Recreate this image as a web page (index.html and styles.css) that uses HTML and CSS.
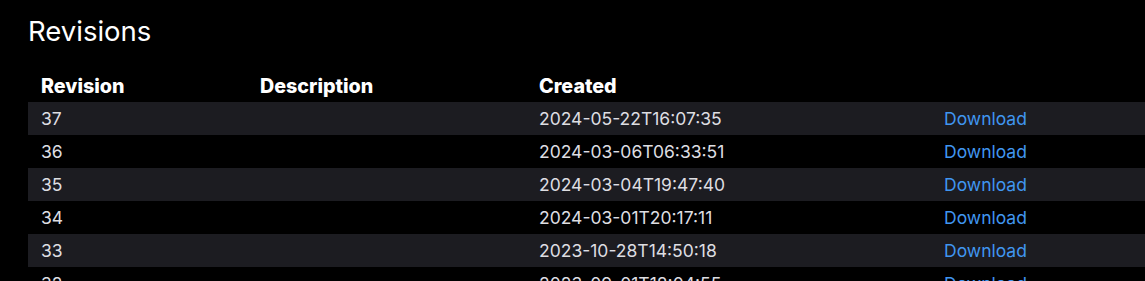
FILE: index.html
```html
<!DOCTYPE html>
<html>
<head>
<meta charset="utf-8">
<link rel="stylesheet" href="styles.css">
</head>
<body>
<div class="page">
  <h2 class="title">Revisions</h2>
  <table class="revs">
    <colgroup>
      <col class="c1"><col class="c2"><col class="c3"><col class="c4">
    </colgroup>
    <thead>
      <tr><th>Revision</th><th>Description</th><th>Created</th><th></th></tr>
    </thead>
    <tbody>
      <tr><td>37</td><td></td><td>2024-05-22T16:07:35</td><td><a href="#">Download</a></td></tr>
      <tr><td>36</td><td></td><td>2024-03-06T06:33:51</td><td><a href="#">Download</a></td></tr>
      <tr><td>35</td><td></td><td>2024-03-04T19:47:40</td><td><a href="#">Download</a></td></tr>
      <tr><td>34</td><td></td><td>2024-03-01T20:17:11</td><td><a href="#">Download</a></td></tr>
      <tr><td>33</td><td></td><td>2023-10-28T14:50:18</td><td><a href="#">Download</a></td></tr>
      <tr><td>32</td><td></td><td>2023-09-01T18:04:55</td><td><a href="#">Download</a></td></tr>
    </tbody>
  </table>
</div>
</body>
</html>
```
FILE: styles.css
```css
html, body {
  margin: 0;
  background: #000;
  color: #e6e6e9;
  font-family: Inter, "Noto Sans", sans-serif;
  overflow: hidden;
}
.page {
  padding: 12px 0 0 28px;
}
.title {
  margin: 0 0 19px 0;
  font-size: 27.5px;
  font-weight: 400;
  line-height: 38px;
  color: #fff;
}
.revs {
  border-collapse: collapse;
  table-layout: fixed;
  width: 1160px;
  font-size: 17.5px;
}
.c1 { width: 219px; }
.c2 { width: 279px; }
.c3 { width: 405px; }
.revs th {
  text-align: left;
  font-weight: 800;
  font-size: 19.7px;
  color: #fff;
  height: 33px;
  padding: 0 13px;
}
.revs td {
  height: 33px;
  padding: 0 13px;
  color: #dedee2;
}
.revs tbody tr:nth-child(odd) {
  background: #1c1c21;
}
.revs a {
  color: #4096f0;
  text-decoration: none;
}
```
